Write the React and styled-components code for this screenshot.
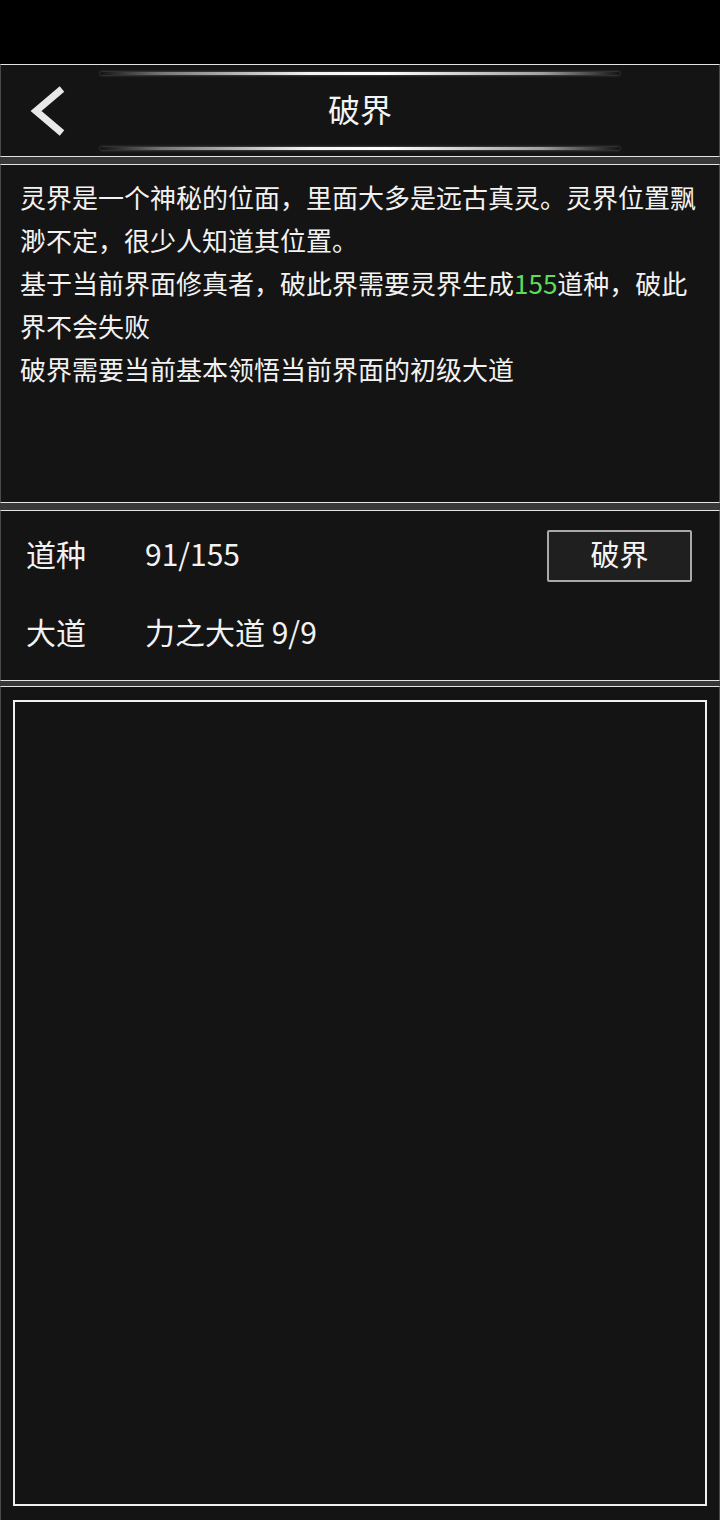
import React from 'react'
import styled, { createGlobalStyle } from 'styled-components'

const GlobalStyle = createGlobalStyle`
    html, body {
        margin: 0;
        padding: 0;
        background: #000;
    }
    body {
        font-family: "Noto Sans CJK SC", "Noto Sans", sans-serif;
        color: #f2f2f2;
    }
    * { box-sizing: border-box; }
`;

const Page = styled.div`
    display: flex;
    flex-direction: column;
    min-height: 100vh;
    background: #000;
`;
const StatusBar = styled.div`
    height: 64px;
    flex-shrink: 0;
    background: #000;
`;
const Frame = styled.div`
    flex: 1;
    display: flex;
    flex-direction: column;
    gap: ${p => p.gap || 7}px;
    background: #383838;
`;
const Panel = styled.div`
    background: #141414;
    border-top: 1px solid #e4e4e4;
    border-bottom: 1px solid #e4e4e4;
    border-left: 1px solid #4a4a4a;
    border-right: 1px solid #4a4a4a;
    flex-shrink: 0;
    height: ${p => p.h ? p.h + 'px' : 'auto'};
`;
const HeaderPanel = styled(Panel)`
    display: flex;
    flex-direction: column;
    padding: 7px 0 6px;
`;
const GlowLine = styled.div`
    width: 520px;
    height: 3px;
    margin: 0 auto;
    border-radius: 2px;
    background: linear-gradient(90deg,
        rgba(255, 255, 255, 0) 0%,
        rgba(200, 200, 200, 0.55) 12%,
        rgba(255, 255, 255, 0.95) 40%,
        #fff 55%,
        rgba(220, 220, 220, 0.7) 85%,
        rgba(255, 255, 255, 0) 100%);
    box-shadow: 0 0 3px rgba(255, 255, 255, 0.35);
`;
const HeaderRow = styled.div`
    flex: 1;
    display: grid;
    grid-template-columns: 1fr auto 1fr;
    align-items: center;
`;
const BackButton = styled.button`
    justify-self: start;
    margin-left: 27px;
    padding: 0;
    border: none;
    background: none;
    display: flex;
    cursor: pointer;
`;
const Title = styled.h1`
    margin: 0 0 6px;
    font-size: 32px;
    font-weight: 400;
    line-height: 1;
    color: #f4f4f4;
`;
const TextPanel = styled(Panel)`
    padding: 10px 20px 0 19px;
`;
const Paragraph = styled.p`
    margin: 0;
    font-size: 26px;
    line-height: 43px;
    color: #f2f2f2;
`;
const Highlight = styled.span`
    color: #5fdc5a;
`;
const StatsPanel = styled(Panel)`
    padding: 3px 27px 0 25px;
`;
const StatRow = styled.div`
    height: 78px;
    display: flex;
    align-items: center;
`;
const StatLabel = styled.span`
    width: 119px;
    font-size: 30px;
    color: #f2f2f2;
`;
const StatValue = styled.span`
    flex: 1;
    font-size: 30px;
    color: #f2f2f2;
`;
const ActionButton = styled.button`
    width: 145px;
    height: 52px;
    margin-top: 5px;
    border: 2px solid #a9a9a9;
    border-radius: 2px;
    background: #1f1f1f;
    color: #f4f4f4;
    font-family: inherit;
    font-size: 29px;
    line-height: 1;
    padding: 0 0 5px;
    cursor: pointer;
`;
const BottomPanel = styled(Panel)`
    flex: 1;
    display: flex;
    border-bottom: none;
    padding: 13px 12px 14px;
`;
const InnerBox = styled.div`
    flex: 1;
    border: 2px solid #f0f0f0;
`;

const Chevron = () => (
    <svg width='38' height='52' viewBox='0 0 38 52'>
        <polyline
            points='34,4 8,26 34,48'
            fill='none'
            stroke='#e8e8e8'
            strokeWidth='7'
            strokeLinejoin='miter'
        />
    </svg>
)

export default function App() {
    return (
        <Page>
            <GlobalStyle />
            <StatusBar />
            <Frame>
                <HeaderPanel h={93}>
                    <GlowLine />
                    <HeaderRow>
                        <BackButton aria-label='back'><Chevron /></BackButton>
                        <Title>破界</Title>
                        <span />
                    </HeaderRow>
                    <GlowLine />
                </HeaderPanel>
                <TextPanel h={339}>
                    <Paragraph>灵界是一个神秘的位面，里面大多是远古真灵。灵界位置飘渺不定，很少人知道其位置。</Paragraph>
                    <Paragraph>基于当前界面修真者，破此界需要灵界生成<Highlight>155</Highlight>道种，破此界不会失败</Paragraph>
                    <Paragraph>破界需要当前基本领悟当前界面的初级大道</Paragraph>
                </TextPanel>
                <Frame gap={5}>
                    <StatsPanel h={171}>
                        <StatRow>
                            <StatLabel>道种</StatLabel>
                            <StatValue>91/155</StatValue>
                            <ActionButton>破界</ActionButton>
                        </StatRow>
                        <StatRow>
                            <StatLabel>大道</StatLabel>
                            <StatValue>力之大道 9/9</StatValue>
                        </StatRow>
                    </StatsPanel>
                    <BottomPanel>
                        <InnerBox />
                    </BottomPanel>
                </Frame>
            </Frame>
        </Page>
    )
}
